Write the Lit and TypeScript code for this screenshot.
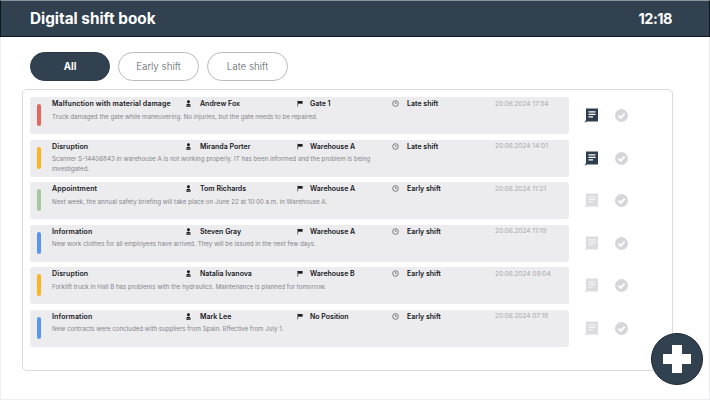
import { LitElement, html, css, svg } from 'lit';
import { customElement, state } from 'lit/decorators.js';

type Entry = {
  type: string;
  color: string;
  person: string;
  place: string;
  shift: string;
  date: string;
  text: string;
  unread?: boolean;
};

const ENTRIES: Entry[] = [
  { type: 'Malfunction with material damage', color: '#e5665c', person: 'Andrew Fox', place: 'Gate 1', shift: 'Late shift', date: '20.06.2024 17:54', text: 'Truck damaged the gate while maneuvering. No injuries, but the gate needs to be repaired.', unread: true },
  { type: 'Disruption', color: '#fdb322', person: 'Miranda Porter', place: 'Warehouse A', shift: 'Late shift', date: '20.06.2024 14:01', text: 'Scanner S-14406843 in warehouse A is not working properly. IT has been informed and the problem is being investigated.', unread: true },
  { type: 'Appointment', color: '#a3c99c', person: 'Tom Richards', place: 'Warehouse A', shift: 'Early shift', date: '20.06.2024 11:21', text: 'Next week, the annual safety briefing will take place on June 22 at 10:00 a.m. in Warehouse A.' },
  { type: 'Information', color: '#5b95f2', person: 'Steven Gray', place: 'Warehouse A', shift: 'Early shift', date: '20.06.2024 11:19', text: 'New work clothes for all employees have arrived. They will be issued in the next few days.' },
  { type: 'Disruption', color: '#fdb322', person: 'Natalia Ivanova', place: 'Warehouse B', shift: 'Early shift', date: '20.06.2024 09:04', text: 'Forklift truck in Hall B has problems with the hydraulics. Maintenance is planned for tomorrow.' },
  { type: 'Information', color: '#5b95f2', person: 'Mark Lee', place: 'No Position', shift: 'Early shift', date: '20.06.2024 07:18', text: 'New contracts were concluded with suppliers from Spain. Effective from July 1.' },
];

const personIcon = svg`<svg class="ic" viewBox="0 0 8 8"><circle cx="2.800" cy="1.900" r="1.700" fill="#16181c"/><path d="M.4 7.700V6.100C.4 4.900 1.400 4.200 2.800 4.200s2.400.7 2.400 1.900v1.600z" fill="#16181c"/><path d="M.4 6.300h4.800" stroke="#ecebee" stroke-width=".4"/></svg>`;
const flagIcon = svg`<svg class="ic" viewBox="0 0 8 8"><path d="M.8.8v6.600" stroke="#16181c" stroke-width=".7" fill="none"/><path d="M1.200 1.200h5.200v3H1.200z" fill="#16181c"/></svg>`;
const clockIcon = svg`<svg class="ic" viewBox="0 0 8 8"><circle cx="4" cy="4" r="3.200" stroke="#333" stroke-width=".7" fill="none"/><path d="M4 2.200V4h1.400" stroke="#333" stroke-width=".6" fill="none"/></svg>`;

@customElement('app-root')
export class AppRoot extends LitElement {
  @state() filter = 'All';

  static styles = css`
    :host {
      display: block;
      width: 710px;
      height: 400px;
      font-family: 'Inter', 'Liberation Sans', sans-serif;
      color: #16181c;
    }
    .page {
      position: relative;
      width: 710px;
      height: 400px;
      background: #fff;
      box-shadow: inset 0 0 0 1px #eeeef2;
    }
    header {
      box-sizing: border-box;
      height: 37px;
      background: #324150;
      border: 1px solid #10161d;
      border-top: 1px solid #8a929a;
      display: flex;
      align-items: center;
      justify-content: space-between;
      padding: 0 37px 0 29px;
      color: #fff;
      font-weight: 700;
    }
    .title {
      font-size: 15.3px;
    }
    .time {
      font-size: 14.5px;
      letter-spacing: -0.5px;
    }
    .tabs {
      display: flex;
      gap: 8px;
      padding: 15px 0 0 30px;
    }
    .tab {
      box-sizing: border-box;
      width: 81px;
      height: 29px;
      border-radius: 15px;
      border: 1px solid #b9b9c0;
      background: #fff;
      color: #5c6068;
      font: inherit;
      font-size: 9.8px;
      font-weight: 300;
      padding: 0;
    }
    .tab.on {
      width: 80px;
      border-color: #2c3a48;
      background: #324150;
      color: #fff;
      font-weight: 700;
    }
    .panel {
      box-sizing: border-box;
      margin: 8px 0 0 22px;
      width: 651px;
      height: 282px;
      border: 1px solid #d9d9de;
      border-radius: 5px;
      padding: 7px;
      display: flex;
      flex-direction: column;
      gap: 5.5px;
    }
    .line {
      display: flex;
      align-items: center;
    }
    .row {
      box-sizing: border-box;
      width: 539px;
      height: 37px;
      background: #ecebee;
      border-radius: 3px;
      display: flex;
      padding-left: 7px;
    }
    .mark {
      width: 3.5px;
      height: 22px;
      margin-top: 7px;
      border-radius: 2px;
      flex: none;
    }
    .body {
      flex: 1;
      padding-left: 11.500px;
    }
    .top {
      display: grid;
      grid-template-columns: 134px 14px 97px 13px 82px 15px 88px auto;
      align-items: center;
      height: 13px;
      font-size: 7px;
      font-weight: 600;
      white-space: nowrap;
    }
    .type {
      letter-spacing: 0.12px;
    }
    .ic {
      width: 7px;
      height: 7px;
      display: block;
    }
    .date {
      color: #a8a8ae;
      font-size: 6.5px;
      font-weight: 400;
    }
    .text {
      width: 340px;
      margin-top: 1.5px;
      font-size: 6.2px;
      line-height: 9.5px;
      color: #84848c;
    }
    .actions {
      display: flex;
      align-items: center;
      gap: 16px;
      padding-left: 15px;
    }
    .actions svg {
      display: block;
      flex: none;
    }
    .fab {
      position: absolute;
      left: 651px;
      top: 333px;
      width: 52px;
      height: 52px;
      border-radius: 50%;
      border: 1px solid #1c2630;
      box-sizing: border-box;
      background: #324150;
      padding: 0;
      display: flex;
      align-items: center;
      justify-content: center;
    }
  `;

  renderComment(unread?: boolean) {
    const bg = unread ? '#2f3e4e' : '#dcdbdf';
    const fg = unread ? '#fff' : '#f3f3f5';
    return html`<svg width="15" height="15" viewBox="0 0 15 15">
      <path d="M2 .5h12v13H3L.5 14.700 2 12z" fill=${bg} />
      <path d="M4.500 3.800h7M4.500 6.300h7M4.500 8.800h4.500" stroke=${fg} stroke-width="1.300" fill="none" />
    </svg>`;
  }

  renderCheck() {
    return html`<svg width="13" height="13" viewBox="0 0 13 13">
      <circle cx="6.500" cy="6.500" r="6.500" fill="#d6d5d9" />
      <path d="M3.400 6.700l2.200 2.200 4-4.300" stroke="#fff" stroke-width="1.900" fill="none" />
    </svg>`;
  }

  render() {
    return html`
      <div class="page">
        <header><span class="title">Digital shift book</span><span class="time">12:18</span></header>
        <div class="tabs">
          ${['All', 'Early shift', 'Late shift'].map(
            (t) => html`<button class="tab ${this.filter === t ? 'on' : ''}">${t}</button>`
          )}
        </div>
        <div class="panel">
          ${ENTRIES.map(
            (e) => html`
              <div class="line">
                <div class="row">
                  <div class="mark" style="background:${e.color}"></div>
                  <div class="body">
                    <div class="top">
                      <span class="type">${e.type}</span>${personIcon}<span>${e.person}</span>${flagIcon}<span>${e.place}</span>${clockIcon}<span>${e.shift}</span>
                      <span class="date">${e.date}</span>
                    </div>
                    <div class="text">${e.text}</div>
                  </div>
                </div>
                <div class="actions">${this.renderComment(e.unread)}${this.renderCheck()}</div>
              </div>
            `
          )}
        </div>
        <button class="fab">
          <svg width="30" height="30" viewBox="0 0 30 30"><path d="M10 1h10v9h9v10h-9v9H10v-9H1V10h9z" fill="#fff" /></svg>
        </button>
      </div>
    `;
  }
}
